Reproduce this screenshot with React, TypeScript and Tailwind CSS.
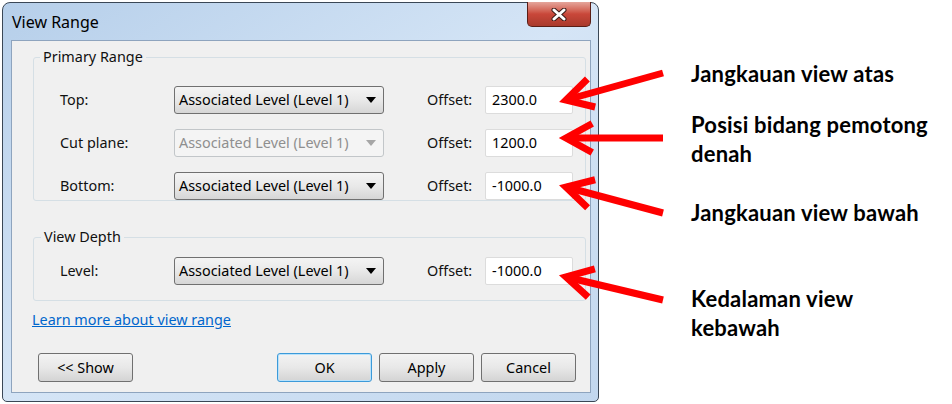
import React from "react";

type Pt = [number, number];

const arrows: { tail: Pt; tip: Pt }[] = [
  { tail: [663, 73], tip: [566, 100] },
  { tail: [663, 138], tip: [566, 138] },
  { tail: [663, 213], tip: [566, 187] },
  { tail: [663, 300], tip: [566, 277] },
];

// two short wings that open back from the tip
const wings = (tail: Pt, tip: Pt): [Pt, Pt] => {
  const dx = tail[0] - tip[0];
  const dy = tail[1] - tip[1];
  const len = Math.hypot(dx, dy);
  const ux = dx / len;
  const uy = dy / len;
  const L = 30;
  const rot = (a: number): Pt => [
    tip[0] + L * (ux * Math.cos(a) - uy * Math.sin(a)),
    tip[1] + L * (ux * Math.sin(a) + uy * Math.cos(a)),
  ];
  const a = (29 * Math.PI) / 180;
  return [rot(a), rot(-a)];
};

const Arrows = () => (
  <svg className="pointer-events-none absolute inset-0" width={952} height={404}>
    {arrows.map(({ tail, tip }, i) => {
      const [w1, w2] = wings(tail, tip);
      return (
        <g key={i} stroke="#ff0000" strokeWidth={7} fill="none">
          <line x1={tail[0]} y1={tail[1]} x2={tip[0]} y2={tip[1]} />
          <polyline
            points={`${w1[0]},${w1[1]} ${tip[0]},${tip[1]} ${w2[0]},${w2[1]}`}
            strokeLinejoin="miter"
          />
        </g>
      );
    })}
  </svg>
);

const Combo = ({ disabled = false }: { disabled?: boolean }) => (
  <div
    className={`flex h-[28px] w-[210px] items-center justify-between rounded-[3px] border pl-[4px] pr-[7px] ${
      disabled
        ? "border-[#c2c6c9] bg-[#f4f4f4] text-[#8f8f8f]"
        : "border-[#707070] bg-gradient-to-b from-[#f4f4f4] via-[#e9e9e9] to-[#d6d6d6] text-black"
    }`}
  >
    <span>Associated Level (Level 1)</span>
    <svg width="10" height="6" viewBox="0 0 10 6">
      <path d="M0 0 L10 0 L5 6 Z" fill={disabled ? "#a6a6a6" : "#000"} />
    </svg>
  </div>
);

const Row = ({ label, value, disabled = false }: { label: string; value: string; disabled?: boolean }) => (
  <div className="flex items-center pl-[26px]">
    <span className="w-[114px]">{label}</span>
    <Combo disabled={disabled} />
    <span className="ml-[43px] w-[58px]">Offset:</span>
    <div className="flex h-[28px] w-[88px] items-center rounded-[2px] border border-[#dcdcdc] bg-white pl-[6px] text-black">
      {value}
    </div>
  </div>
);

const Button = ({ children, primary = false }: { children: React.ReactNode; primary?: boolean }) => (
  <div
    className={`flex h-[29px] w-[95px] items-center justify-center rounded-[3px] border bg-gradient-to-b from-[#f3f3f3] via-[#e8e8e8] to-[#d4d4d4] text-black ${
      primary ? "border-[#3c9ad9] shadow-[inset_0_0_0_1px_#b9e2fb]" : "border-[#707070]"
    }`}
  >
    {children}
  </div>
);

const Dialog = () => (
  <div className="ml-[2px] mt-[2px] flex h-[400px] w-[597px] flex-col rounded-t-[8px] rounded-b-[5px] border border-[#3a4756] bg-gradient-to-br from-[#b6cfea] via-[#d5e5f6] to-[#c2d7ee] pb-[8px] pl-[8px] pr-[7px]">
    <div className="flex h-[37px] items-start justify-between">
      <span className="pl-[1px] pt-[7px] text-[16px] text-black">View Range</span>
      <div className="-mt-[1px] flex h-[25px] w-[64px] items-center justify-center rounded-b-[5px] border border-t-0 border-[#5a1e16] bg-gradient-to-b from-[#e4a59b] via-[#c9473a] to-[#a93a2c]">
        <svg width="18" height="13" viewBox="0 0 18 13">
          <path d="M4 2 L14 11 M14 2 L4 11" stroke="#3b1c18" strokeWidth={5} strokeLinecap="round" />
          <path d="M4 2 L14 11 M14 2 L4 11" stroke="#fff" strokeWidth={3} strokeLinecap="round" />
        </svg>
      </div>
    </div>

    <div className="flex flex-1 flex-col border border-[#8ea4be] bg-[#f0f0f0] text-[14.4px] text-[#111]">
      <fieldset className="ml-[21px] mt-[7px] w-[553px] rounded-[3px] border border-[#d5dfe5] pb-0">
        <legend className="ml-[6px] px-[3px] leading-[18px]">Primary Range</legend>
        <div className="mt-[20px] flex flex-col gap-[15px]">
          <Row label="Top:" value="2300.0" />
          <Row label="Cut plane:" value="1200.0" disabled />
          <Row label="Bottom:" value="-1000.0" />
        </div>
      </fieldset>

      <fieldset className="ml-[21px] mt-[27px] w-[553px] rounded-[3px] border border-[#d5dfe5] pb-[15px]">
        <legend className="ml-[7px] px-[3px] leading-[18px]">View Depth</legend>
        <div className="mt-[11px]">
          <Row label="Level:" value="-1000.0" />
        </div>
      </fieldset>

      <a className="ml-[20px] mt-[10px] self-start leading-[18px] text-[#0066cc] underline">
        Learn more about view range
      </a>

      <div className="mt-[24px] flex justify-between pl-[26px] pr-[14px]">
        <Button>&lt;&lt; Show</Button>
        <div className="flex gap-[7px]">
          <Button primary>OK</Button>
          <Button>Apply</Button>
          <Button>Cancel</Button>
        </div>
      </div>
    </div>
  </div>
);

const Notes = () => (
  <div className="ml-[92px] flex flex-col pt-[59px] font-['Lato',sans-serif] text-[22px] font-bold leading-[29px] tracking-[0.2px] text-black">
    <p>Jangkauan view atas</p>
    <p className="mt-[22px]">
      Posisi bidang pemotong
      <br />
      denah
    </p>
    <p className="mt-[30px]">Jangkauan view bawah</p>
    <p className="mt-[57px]">
      Kedalaman view
      <br />
      kebawah
    </p>
  </div>
);

export default function App() {
  return (
    <div className="relative flex h-[404px] w-[952px] overflow-hidden bg-white font-['Noto_Sans',sans-serif]">
      <Dialog />
      <Notes />
      <Arrows />
    </div>
  );
}
